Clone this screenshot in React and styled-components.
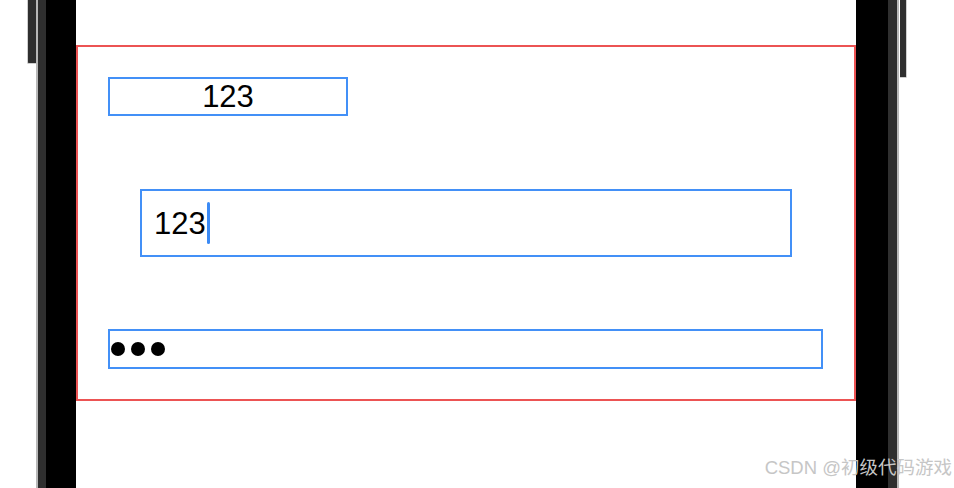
import styled, { createGlobalStyle } from "styled-components";

const GlobalStyle = createGlobalStyle`
  html, body {
    margin: 0;
    padding: 0;
    background: #ffffff;
    font-family: "Liberation Sans", Arial, sans-serif;
  }
`;

const Page = styled.div`
  position: relative;
  width: 954px;
  height: 488px;
  overflow: hidden;
  background: #ffffff;
  display: flex;
  padding-left: 36px;
  box-sizing: border-box;
`;

const Device = styled.div`
  position: relative;
  display: flex;
  height: 100%;
  border-left: 2px solid #b8b8b8;
  border-right: 2px solid #b8b8b8;
`;

const Bezel = styled.div`
  display: flex;
  border-left: 8px solid #2f2f2f;
  border-right: 9px solid #2f2f2f;
`;

const Glass = styled.div`
  display: flex;
  background: #000000;
  padding: 0 32px 0 30px;
`;

const SideButton = styled.div`
  position: absolute;
  top: 0;
  width: 8px;
  height: ${(p) => p.length}px;
  background: #2f2f2f;
  border-bottom: 1px solid #cfcfcf;
  ${(p) =>
    p.side === "left"
      ? `left: -11px; border-left: 1px solid #cfcfcf; border-bottom-left-radius: 2px;`
      : `right: -10px; width: 6px; border-right: 1px solid #cfcfcf; border-bottom-right-radius: 2px;`}
`;

const Screen = styled.div`
  width: 780px;
  background: #ffffff;
  display: flex;
  flex-direction: column;
  padding-top: 45px;
  box-sizing: border-box;
`;

const Container = styled.div`
  height: 356px;
  border: 2px solid #ec5353;
  box-sizing: border-box;
  display: flex;
  flex-direction: column;
  align-items: flex-start;
  padding: 30px 30px;
`;

const Field = styled.div`
  box-sizing: border-box;
  width: ${(p) => p.width}px;
  height: ${(p) => p.height}px;
  margin-left: ${(p) => p.indent || 0}px;
  margin-top: ${(p) => p.gap || 0}px;
  border: 2px solid #4390f7;
  display: flex;
  align-items: center;
  justify-content: ${(p) => (p.center ? "center" : "flex-start")};
  padding: 0 ${(p) => p.pad || 0}px;
  font-size: 31px;
  color: #000000;
  line-height: 1;
`;

const Caret = styled.span`
  display: inline-block;
  width: 3px;
  height: 42px;
  border-radius: 2px;
  background: #3b8af5;
  margin-left: 1px;
`;

const Dot = styled.span`
  display: inline-block;
  width: 14px;
  height: 14px;
  border-radius: 50%;
  background: #000000;
  margin-right: 6px;
`;

const Watermark = styled.div`
  position: absolute;
  right: 2px;
  bottom: 9px;
  font-family: "Liberation Sans", "Noto Sans CJK SC", sans-serif;
  font-size: 18.5px;
  color: #c6c6c6;
  white-space: nowrap;
`;

export default function App() {
  return (
    <>
      <GlobalStyle />
      <Page>
        <Device>
          <SideButton side="left" length={63} />
          <SideButton side="right" length={77} />
          <Bezel>
            <Glass>
              <Screen>
                <Container>
                  <Field width={240} height={39} center>
                    123
                  </Field>
                  <Field width={652} height={68} indent={32} gap={73} pad={12}>
                    123
                    <Caret />
                  </Field>
                  <Field width={715} height={40} gap={72} pad={1}>
                    <Dot />
                    <Dot />
                    <Dot />
                  </Field>
                </Container>
              </Screen>
            </Glass>
          </Bezel>
        </Device>
        <Watermark>CSDN @初级代码游戏</Watermark>
      </Page>
    </>
  );
}
